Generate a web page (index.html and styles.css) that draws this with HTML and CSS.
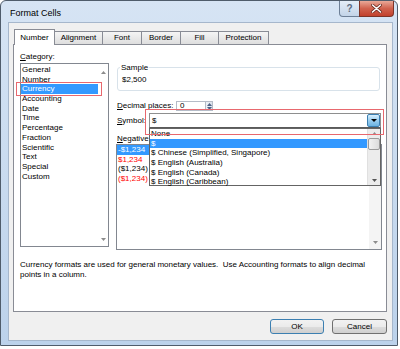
FILE: index.html
```html
<!DOCTYPE html>
<html lang="en">

<head>
    <meta charset="UTF-8">
    <title>Format Cells</title>
    <link rel="stylesheet" href="styles.css">
</head>

<body>

    <div class="window">
        <div class="titlebar">
            <span class="title">Format Cells</span>
            <div class="caption-btns">
                <span class="cap-btn help">?</span>
                <span class="cap-btn close">
                    <svg width="11" height="9" viewBox="0 0 11 9">
                        <path d="M1.5 1 L9.5 8 M9.5 1 L1.5 8" stroke="#6b2a20" stroke-width="3" stroke-linecap="round" />
                        <path d="M1.5 1 L9.5 8 M9.5 1 L1.5 8" stroke="#fff" stroke-width="1.6" stroke-linecap="round" />
                    </svg>
                </span>
            </div>
        </div>

        <div class="client">
            <div class="tabs">
                <span class="tab active w-number">Number</span>
                <span class="tab w-align">Alignment</span>
                <span class="tab w-font">Font</span>
                <span class="tab w-border">Border</span>
                <span class="tab w-fill">Fill</span>
                <span class="tab w-prot">Protection</span>
            </div>

            <div class="panel">
                <div class="columns">
                    <div class="left-col">
                        <div class="label"><u>C</u>ategory:</div>
                        <div class="listbox category-list">
                            <ul class="items">
                                <li>General</li>
                                <li>Number</li>
                                <li class="selected">Currency</li>
                                <li>Accounting</li>
                                <li>Date</li>
                                <li>Time</li>
                                <li>Percentage</li>
                                <li>Fraction</li>
                                <li>Scientific</li>
                                <li>Text</li>
                                <li>Special</li>
                                <li>Custom</li>
                            </ul>
                            <div class="scroll plain">
                                <svg width="5" height="3"><path d="M0 3 L2.5 0 L5 3Z" fill="#8c8c8c" /></svg>
                                <svg width="5" height="3"><path d="M0 0 L2.5 3 L5 0Z" fill="#8c8c8c" /></svg>
                            </div>
                            <span class="mark mark-currency"></span>
                        </div>
                    </div>

                    <div class="right-col">
                        <fieldset class="sample">
                            <legend>Sample</legend>
                            <div class="sample-value">$2,500</div>
                        </fieldset>

                        <div class="row decimal-row">
                            <span class="label decimal-label"><u>D</u>ecimal places:</span>
                            <div class="spin">
                                <span class="spin-value">0</span>
                                <span class="spin-btns">
                                    <svg width="5" height="3"><path d="M0 3 L2.5 0 L5 3Z" fill="#4d6185" /></svg>
                                    <svg width="5" height="3"><path d="M0 0 L2.5 3 L5 0Z" fill="#4d6185" /></svg>
                                </span>
                            </div>
                        </div>

                        <div class="row symbol-row">
                            <span class="label symbol-label"><u>S</u>ymbol:</span>
                            <div class="combo">
                                <span class="combo-value">$</span>
                                <span class="combo-btn">
                                    <svg width="6" height="3"><path d="M0 0 L3 3 L6 0Z" fill="#000" /></svg>
                                </span>
                                <div class="dropdown">
                                    <ul class="items">
                                        <li>None</li>
                                        <li class="selected">$</li>
                                        <li>$ Chinese (Simplified, Singapore)</li>
                                        <li>$ English (Australia)</li>
                                        <li>$ English (Canada)</li>
                                        <li>$ English (Caribbean)</li>
                                    </ul>
                                    <div class="scroll track">
                                        <svg width="5" height="3"><path d="M0 3 L2.5 0 L5 3Z" fill="#8c8c8c" /></svg>
                                        <span class="thumb"></span>
                                        <span class="spacer"></span>
                                        <svg width="5" height="3"><path d="M0 0 L2.5 3 L5 0Z" fill="#555" /></svg>
                                    </div>
                                </div>
                            </div>
                            <span class="mark mark-symbol"></span>
                        </div>

                        <div class="label neg-label"><u>N</u>egative numbers:</div>
                        <div class="listbox neg-list">
                            <ul class="items">
                                <li class="selected">-$1,234</li>
                                <li class="red">$1,234</li>
                                <li>($1,234)</li>
                                <li class="red">($1,234)</li>
                            </ul>
                            <div class="scroll track-light">
                                <svg width="5" height="3"><path d="M0 3 L2.5 0 L5 3Z" fill="#8c8c8c" /></svg>
                                <svg width="5" height="3"><path d="M0 0 L2.5 3 L5 0Z" fill="#8c8c8c" /></svg>
                            </div>
                        </div>
                    </div>
                </div>

                <p class="desc">Currency formats are used for general monetary values.&nbsp; Use Accounting formats to align decimal<br>points in a column.</p>
            </div>

            <div class="buttons">
                <button class="btn default">OK</button>
                <button class="btn">Cancel</button>
            </div>
        </div>
    </div>

</body>

</html>
```

FILE: styles.css
```css
* {
    margin: 0;
    padding: 0;
    box-sizing: border-box;
}

body {
    background: #fff;
    font-family: "Liberation Sans", Arial, sans-serif;
    font-size: 8px;
    color: #000;
}

.window {
    width: 398px;
    height: 346px;
    border: 1px solid #4f5c6b;
    border-radius: 6px 6px 0 0;
    background: linear-gradient(#d6e4f4, #bcd2eb);
    padding: 0 4px 4px 7px;
    display: flex;
    flex-direction: column;
}

/* title bar */
.titlebar {
    height: 21px;
    margin: 0 -4px 0 -7px;
    padding: 0 3px 0 9px;
    display: flex;
    justify-content: space-between;
    align-items: flex-start;
}

.title {
    font-size: 9px;
    line-height: 10px;
    margin-top: 7px;
}

.caption-btns {
    display: flex;
}

.cap-btn {
    height: 16px;
    display: flex;
    align-items: center;
    justify-content: center;
    border: 1px solid #6d7f96;
    border-top: none;
}

.help {
    width: 21px;
    background: linear-gradient(#e4edf7, #c3d4e8);
    border-radius: 0 0 0 4px;
    color: #5c6b80;
    font-size: 10px;
    font-weight: bold;
}

.close {
    width: 35px;
    margin-left: -1px;
    background: linear-gradient(#e9a998, #d0624e 50%, #c2412d);
    border-color: #7d3428;
    border-radius: 0 0 4px 0;
}

/* client area */
.client {
    flex: 1;
    background: #f0f0f0;
    border: 1px solid #a6b7cc;
    padding: 6px 5px 0 4px;
    display: flex;
    flex-direction: column;
}

.tabs {
    display: flex;
    align-items: flex-end;
    height: 15px;
    margin-left: 1px;
}

.tab {
    height: 13px;
    line-height: 12px;
    text-align: center;
    border: 1px solid #898c95;
    border-bottom: none;
    background: linear-gradient(#f5f5f5, #dedede);
    margin-left: -1px;
}

.tab:first-child {
    margin-left: 0;
}

.tab.active {
    height: 16px;
    line-height: 15px;
    background: #fff;
    margin-bottom: -1px;
    position: relative;
    z-index: 1;
}

.w-number { width: 41px; }
.w-align { width: 49px; }
.w-font { width: 40px; }
.w-border { width: 40px; }
.w-fill { width: 39px; }
.w-prot { width: 51px; }

.panel {
    height: 268px;
    background: #fff;
    border: 1px solid #898c95;
    padding: 7px 3px 0 6px;
}

.columns {
    display: flex;
}

.label {
    line-height: 10px;
}

.left-col {
    width: 89px;
}

.left-col .label {
    margin-bottom: 1px;
}

.listbox {
    position: relative;
    display: flex;
    border: 1px solid #828790;
    background: #fff;
}

.category-list {
    height: 184px;
    padding-top: 1px;
}

.items {
    list-style: none;
    flex: 1;
}

.items li {
    line-height: 9.7px;
    height: 9.7px;
    padding-left: 1px;
    white-space: nowrap;
}

.items li.selected {
    background: #3399ff;
    color: #fff;
}

.items li.red {
    color: #ff0000;
}

.scroll {
    width: 10px;
    display: flex;
    flex-direction: column;
    justify-content: space-between;
    align-items: center;
    padding: 6px 0 5px;
}

.mark {
    position: absolute;
    border: 1px solid #e8686e;
    pointer-events: none;
}

.mark-currency {
    left: -5px;
    top: 18px;
    width: 86px;
    height: 14px;
}

.right-col {
    width: 266px;
    margin-left: 7px;
    padding-top: 11px;
}

.sample {
    margin-left: 1px;
    width: 263px;
    border: 1px solid #d8e2ea;
    border-radius: 3px;
    padding: 3px 2px 5px;
}

.sample legend {
    line-height: 9px;
    padding: 0 1px;
}

.sample-value {
    line-height: 10px;
    padding-left: 2px;
}

.row {
    position: relative;
    display: flex;
    align-items: center;
    margin-left: 1px;
}

.decimal-row {
    margin-top: 10px;
    height: 10px;
}

.decimal-label {
    width: 59px;
}

.spin {
    width: 37px;
    height: 10px;
    display: flex;
    border: 1px solid #b5bcc7;
}

.spin-value {
    flex: 1;
    line-height: 8px;
    padding-left: 3px;
}

.spin-btns {
    width: 7px;
    display: flex;
    flex-direction: column;
    justify-content: space-around;
    align-items: center;
    background: linear-gradient(90deg, #eef2f7, #d9e1ea);
    border-left: 1px solid #b5bcc7;
}

.symbol-row {
    margin-top: 2px;
    height: 15px;
}

.symbol-label {
    width: 32px;
}

.combo {
    position: relative;
    width: 232px;
    height: 15px;
    display: flex;
    align-items: center;
    border: 1px solid #8e8f8f;
    border-bottom-color: #5a5a5a;
    background: #fff;
}

.combo-value {
    flex: 1;
    padding-left: 2px;
}

.combo-btn {
    width: 13px;
    height: 13px;
    display: flex;
    align-items: center;
    justify-content: center;
    background: linear-gradient(#d9effc, #98cdf0 50%, #6cb3e2);
    border: 1px solid #3c7fb1;
    border-radius: 2px;
}

.dropdown {
    position: absolute;
    left: -1px;
    top: 14px;
    width: 232px;
    height: 58px;
    display: flex;
    background: #fff;
    border: 1px solid #646464;
    z-index: 2;
}

.dropdown .items li {
    padding-left: 1px;
}

.dropdown .scroll {
    width: 13px;
    padding: 3px 0 3px;
    justify-content: flex-start;
    background: #ececec;
    border-left: 1px solid #e0e0e0;
}

.thumb {
    width: 12px;
    height: 12px;
    margin-top: 3px;
    border: 1px solid #9b9b9b;
    border-radius: 2px;
    background: linear-gradient(90deg, #f2f2f2, #dcdcdc);
}

.spacer {
    flex: 1;
}

.mark-symbol {
    left: 28px;
    top: -4px;
    width: 239px;
    height: 26px;
    z-index: 3;
}

.neg-label {
    margin-top: 6px;
    margin-left: 1px;
}

.neg-list {
    height: 106px;
}

.neg-list .items li {
    height: 9.6px;
    line-height: 9.6px;
}

.track-light {
    width: 12px;
    background: #f4f4f4;
}

.desc {
    margin-top: 10px;
    line-height: 10px;
}

.buttons {
    display: flex;
    justify-content: flex-end;
    gap: 8px;
    margin-top: 7px;
}

.btn {
    height: 15px;
    font-family: inherit;
    font-size: 8px;
    border: 1px solid #707070;
    border-radius: 3px;
    background: linear-gradient(#f2f2f2, #ebebeb 50%, #dddddd 51%, #cfcfcf);
    width: 55px;
}

.btn.default {
    width: 54px;
    border-color: #3c7fb1;
}
```
